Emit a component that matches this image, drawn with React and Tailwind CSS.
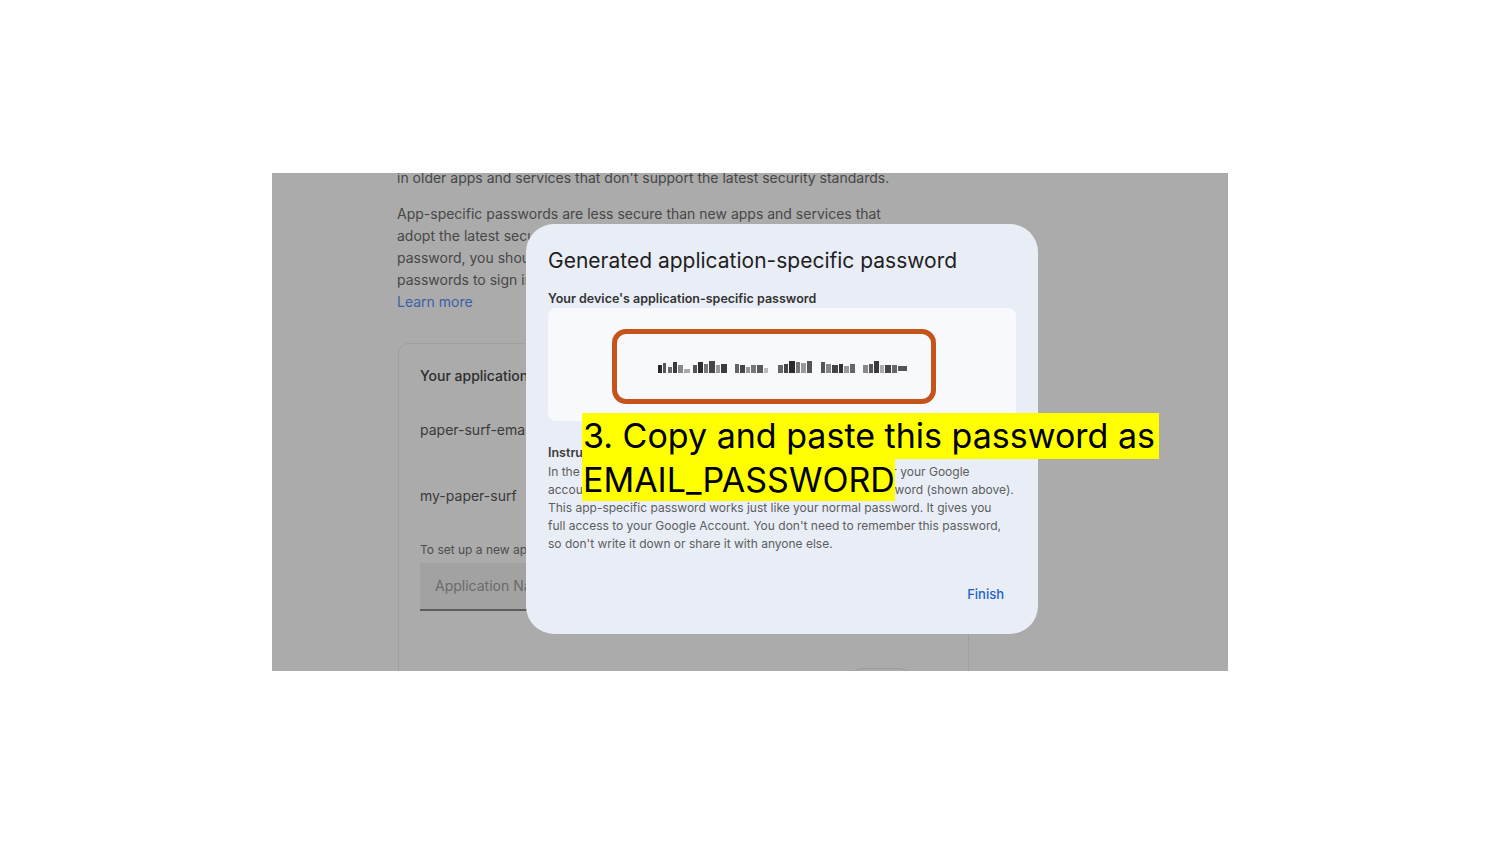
import React from "react";

function BlurredPassword() {
  const blocks = [
    [0, 6, 4, 8, "#2a2a2a"], [5, 4, 3, 10, "#555"], [10, 8, 4, 6, "#6a6a6a"], [15, 3, 4, 11, "#3a3a3a"],
    [20, 6, 5, 8, "#888"], [26, 10, 6, 4, "#aaa"],
    [35, 6, 4, 8, "#555"], [40, 3, 5, 11, "#2e2e2e"], [46, 5, 4, 9, "#777"], [51, 2, 6, 12, "#444"],
    [58, 6, 4, 8, "#999"], [63, 5, 6, 9, "#3c3c3c"],
    [77, 5, 4, 9, "#666"], [82, 6, 5, 8, "#444"], [88, 8, 4, 6, "#999"], [93, 6, 5, 8, "#777"],
    [99, 6, 6, 8, "#5a5a5a"], [106, 9, 4, 5, "#bbb"],
    [120, 6, 5, 8, "#666"], [126, 5, 4, 9, "#444"], [131, 2, 6, 12, "#2a2a2a"], [138, 3, 4, 11, "#777"],
    [143, 4, 5, 10, "#999"], [149, 2, 5, 12, "#555"],
    [163, 3, 4, 11, "#555"], [168, 5, 5, 9, "#888"], [174, 6, 6, 8, "#444"], [181, 5, 4, 9, "#333"],
    [186, 7, 5, 7, "#999"], [192, 5, 5, 9, "#666"],
    [205, 6, 5, 8, "#888"], [211, 5, 4, 9, "#555"], [216, 2, 5, 12, "#3a3a3a"], [222, 6, 4, 8, "#aaa"],
    [227, 6, 6, 8, "#444"], [234, 6, 5, 8, "#666"], [240, 7, 9, 5, "#555"],
  ];
  return (
    <svg width="252" height="18" viewBox="0 0 252 18">
      <defs>
        <filter id="b" x="-5%" y="-30%" width="110%" height="160%">
          <feGaussianBlur stdDeviation="0.7" />
        </filter>
      </defs>
      <g filter="url(#b)">
        {blocks.map(([x, y, w, h, c], i) => (
          <rect key={i} x={x} y={y + 1} width={w} height={h} fill={c} />
        ))}
      </g>
    </svg>
  );
}

export default function App() {
  const sans = { fontFamily: "Inter, 'Open Sans', Arial, sans-serif" };
  return (
    <div className="w-[1500px] h-[844px] bg-white pt-[173px] pl-[272px]" style={sans}>
      <div className="relative w-[956px] h-[498px] overflow-hidden bg-[#ababab]">
        {/* Background page */}
        <div className="pl-[125px] text-[14px] leading-[22px] text-[#474747]">
          <p className="mt-[-6px] whitespace-nowrap">
            in older apps and services that don't support the latest security standards.
          </p>
          <div className="mt-[14px]">
            <p className="whitespace-nowrap">App-specific passwords are less secure than new apps and services that</p>
            <p className="whitespace-nowrap">adopt the latest security standards. Before you create an app</p>
            <p className="whitespace-nowrap">password, you should check to see if your app needs this in order</p>
            <p className="whitespace-nowrap">passwords to sign in.</p>
            <p className="text-[#3b5fa6]">Learn more</p>
          </div>

          <div className="mt-[30px] ml-[1px] w-[571px] h-[400px] rounded-[10px] border border-[#a0a0a0] px-[21px] pt-[22px]">
            <div className="text-[14px] leading-[20px] font-medium text-[#2e2e2e]">Your application-specific passwords</div>
            <div className="mt-[34px] text-[14px] leading-[20px] text-[#3a3a3a]">paper-surf-email</div>
            <div className="mt-[46px] text-[14px] leading-[20px] text-[#3a3a3a]">my-paper-surf</div>
            <div className="mt-[36px] text-[12px] leading-[16px] text-[#4d4d4d]">To set up a new app-specific password, type a name below</div>
            <div className="mt-[5px] w-[300px] h-[48px] bg-[#a2a2a2] border-b-2 border-[#5c5c5c] pl-[15px] flex items-center text-[14px] text-[#6a6a6a]">
              Application Name
            </div>
            <div className="mt-[57px] ml-[428px] w-[66px] h-[30px] rounded-full border border-[#9c9c9c]"></div>
          </div>
        </div>

        {/* Dialog */}
        <div className="absolute left-[254px] top-[51px] w-[512px] h-[410px] rounded-[28px] bg-[#e9edf5] pl-[22px] pr-[22px] pt-[23px]">
          <div className="text-[21px] leading-[28px] text-[#1f1f1f]">Generated application-specific password</div>
          <div className="mt-[15px] text-[12.5px] leading-[18px] font-semibold text-[#333]">Your device's application-specific password</div>
          <div className="mt-[0px] w-[468px] h-[113px] rounded-[8px] bg-[#f8f9fc] pt-[21px] pl-[64px]">
            <div className="w-[324px] h-[75px] rounded-[14px] border-[5px] border-[#c5541c] flex items-center pl-[41px]">
              <BlurredPassword />
            </div>
          </div>
          <div className="mt-[23px] text-[12.5px] leading-[18px] font-semibold text-[#3c3c3c]">Instructions</div>
          <div className="mt-[1px] text-[12px] leading-[18px] text-[#5b5d61] w-[470px]">
            <div className="whitespace-nowrap">In the app or device you're setting up, enter this password for your Google</div>
            <div className="whitespace-nowrap">account, replacing your password with the 16-character password (shown above).</div>
            <div className="whitespace-nowrap">This app-specific password works just like your normal password. It gives you</div>
            <div className="whitespace-nowrap">full access to your Google Account. You don't need to remember this password,</div>
            <div className="whitespace-nowrap">so don't write it down or share it with anyone else.</div>
          </div>
          <div className="mt-[32px] flex justify-end pr-[12px]">
            <span className="text-[13px] leading-[18px] font-medium text-[#1b62d1]">Finish</span>
          </div>
        </div>

        {/* Callout */}
        <div
          className="absolute left-[310px] top-[240px] text-[34px] text-black"
          style={{ fontFamily: "Inter, 'Liberation Sans', sans-serif" }}
        >
          <div className="w-fit bg-[#ffff00] h-[46px] leading-[46px] pl-[1px] pr-[4px]">3. Copy and paste this password as</div>
          <div className="w-fit bg-[#ffff00] h-[42px] leading-[42px] pl-[1px] pr-[0px]">EMAIL_PASSWORD</div>
        </div>
      </div>
    </div>
  );
}
